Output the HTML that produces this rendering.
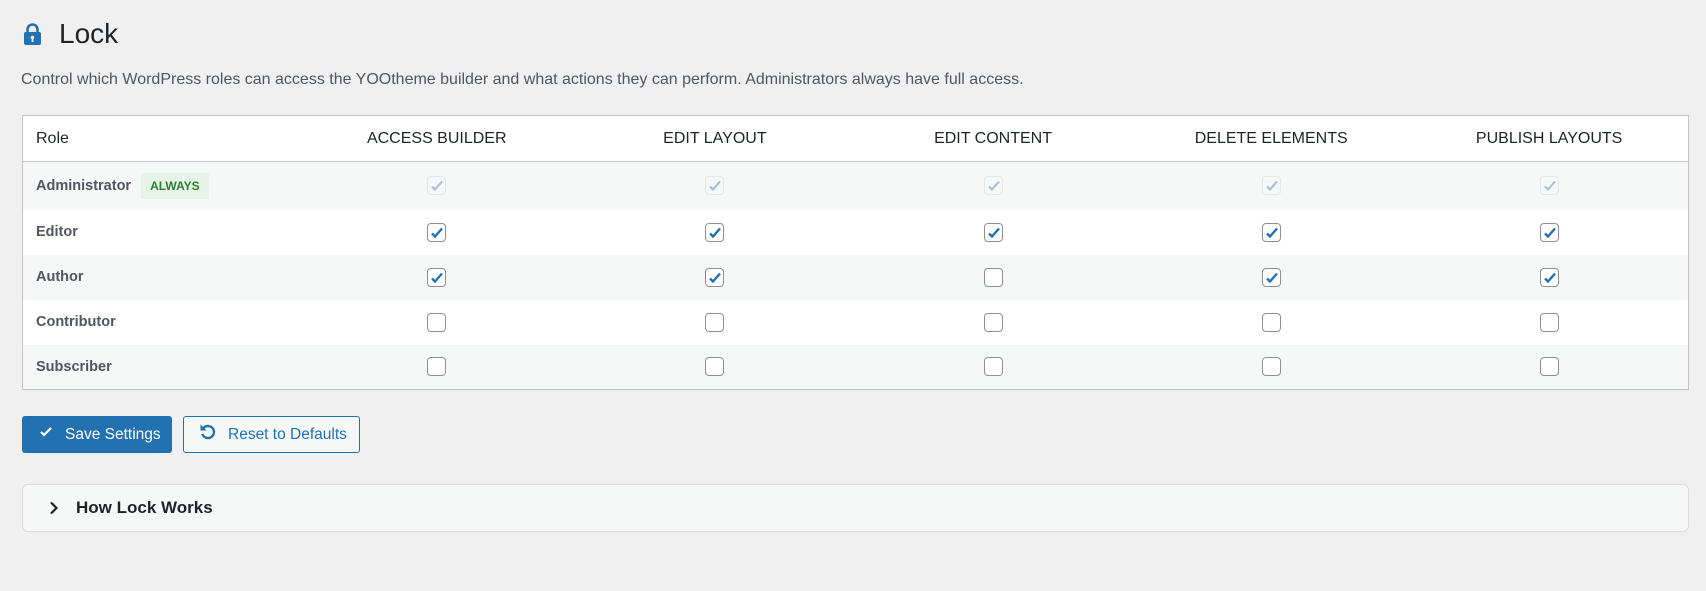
<!DOCTYPE html>
<html><head><meta charset="utf-8"><style>
*{box-sizing:border-box;margin:0;padding:0}
body{width:1706px;height:591px;background:#f0f0f1;font-family:"Liberation Sans",sans-serif;color:#1d2327;position:relative;overflow:hidden}
h1{position:absolute;left:59px;top:18px;font-size:28px;font-weight:500;color:#1d2327}
.lk{position:absolute;left:24px;top:23px}
.desc{position:absolute;left:21px;top:71px;font-size:16px;color:#50575e;white-space:nowrap}
table{position:absolute;left:22px;top:115px;width:1667px;border-collapse:collapse;border:1px solid #c3c4c7;background:#fff;table-layout:fixed}
th{height:46px;font-weight:normal;font-size:16px;color:#1d2327;border-bottom:1px solid #c3c4c7;text-align:center}
th:first-child{text-align:left;padding-left:13px}
td{height:45px;text-align:center}
td:first-child{text-align:left;padding-left:13px;font-size:14.5px;font-weight:bold;color:#50575e;white-space:nowrap}
tr.g td{background:#f6f7f7}
tr.a td{height:48px}
.cb{display:inline-block;width:19px;height:19px;border:1px solid #8c8f94;border-radius:4px;background:#fff;vertical-align:middle;position:relative}
.cb svg{position:absolute;left:1px;top:1px}
.cb.d{border-color:#e6e7e8;background:#f6f7f7}
.al{display:inline-block;margin-left:10px;background:#e8f3e8;color:#2e7d32;font-size:12px;font-weight:bold;padding:6px 9px;vertical-align:middle}
.btn{position:absolute;top:416px;height:37px;border-radius:3px;font-size:15.5px;display:flex;align-items:center;white-space:nowrap}
.save{left:22px;width:150px;background:#2271b1;color:#fff;padding-left:17px}
.reset{left:183px;width:177px;border:1px solid #2271b1;color:#2271b1;background:#f6f7f7;padding-left:15px}
.panel{position:absolute;left:22px;top:484px;width:1667px;height:48px;border:1px solid #dcdcde;border-radius:6px;background:#f6f7f7;font-size:17px;font-weight:bold;display:flex;align-items:center;padding-left:53px}
</style></head><body>
<svg class="lk" width="17" height="22" viewBox="0 0 17 22"><path d="M3.5 10V6.5a5 5 0 0 1 10 0V10" fill="none" stroke="#2271b1" stroke-width="2.6"/><rect x="0" y="9" width="17" height="13" rx="2" fill="#2271b1"/><circle cx="8.5" cy="14.5" r="1.8" fill="#f0f0f1"/><rect x="7.6" y="15" width="1.8" height="4" fill="#f0f0f1"/></svg>
<h1>Lock</h1>
<div class="desc">Control which WordPress roles can access the YOOtheme builder and what actions they can perform. Administrators always have full access.</div>
<table>
<colgroup><col style="width:275px"><col style="width:278px"><col style="width:278px"><col style="width:278px"><col style="width:278px"><col style="width:278px"></colgroup>
<tr><th>Role</th><th>ACCESS BUILDER</th><th>EDIT LAYOUT</th><th>EDIT CONTENT</th><th>DELETE ELEMENTS</th><th>PUBLISH LAYOUTS</th></tr>
<tr class="g a"><td>Administrator<span class="al">ALWAYS</span></td>
<td><span class="cb d"><svg width="16" height="16" viewBox="0 0 16 16"><path d="M3 8.5l3 3 7-8" fill="none" stroke="#a7bcd6" stroke-width="2"/></svg></span></td>
<td><span class="cb d"><svg width="16" height="16" viewBox="0 0 16 16"><path d="M3 8.5l3 3 7-8" fill="none" stroke="#a7bcd6" stroke-width="2"/></svg></span></td>
<td><span class="cb d"><svg width="16" height="16" viewBox="0 0 16 16"><path d="M3 8.5l3 3 7-8" fill="none" stroke="#a7bcd6" stroke-width="2"/></svg></span></td>
<td><span class="cb d"><svg width="16" height="16" viewBox="0 0 16 16"><path d="M3 8.5l3 3 7-8" fill="none" stroke="#a7bcd6" stroke-width="2"/></svg></span></td>
<td><span class="cb d"><svg width="16" height="16" viewBox="0 0 16 16"><path d="M3 8.5l3 3 7-8" fill="none" stroke="#a7bcd6" stroke-width="2"/></svg></span></td></tr>
<tr><td>Editor</td>
<td><span class="cb"><svg width="16" height="16" viewBox="0 0 16 16"><path d="M3 8.5l3 3 7-8" fill="none" stroke="#2271b1" stroke-width="2.4"/></svg></span></td>
<td><span class="cb"><svg width="16" height="16" viewBox="0 0 16 16"><path d="M3 8.5l3 3 7-8" fill="none" stroke="#2271b1" stroke-width="2.4"/></svg></span></td>
<td><span class="cb"><svg width="16" height="16" viewBox="0 0 16 16"><path d="M3 8.5l3 3 7-8" fill="none" stroke="#2271b1" stroke-width="2.4"/></svg></span></td>
<td><span class="cb"><svg width="16" height="16" viewBox="0 0 16 16"><path d="M3 8.5l3 3 7-8" fill="none" stroke="#2271b1" stroke-width="2.4"/></svg></span></td>
<td><span class="cb"><svg width="16" height="16" viewBox="0 0 16 16"><path d="M3 8.5l3 3 7-8" fill="none" stroke="#2271b1" stroke-width="2.4"/></svg></span></td></tr>
<tr class="g"><td>Author</td>
<td><span class="cb"><svg width="16" height="16" viewBox="0 0 16 16"><path d="M3 8.5l3 3 7-8" fill="none" stroke="#2271b1" stroke-width="2.4"/></svg></span></td>
<td><span class="cb"><svg width="16" height="16" viewBox="0 0 16 16"><path d="M3 8.5l3 3 7-8" fill="none" stroke="#2271b1" stroke-width="2.4"/></svg></span></td>
<td><span class="cb"></span></td>
<td><span class="cb"><svg width="16" height="16" viewBox="0 0 16 16"><path d="M3 8.5l3 3 7-8" fill="none" stroke="#2271b1" stroke-width="2.4"/></svg></span></td>
<td><span class="cb"><svg width="16" height="16" viewBox="0 0 16 16"><path d="M3 8.5l3 3 7-8" fill="none" stroke="#2271b1" stroke-width="2.4"/></svg></span></td></tr>
<tr><td>Contributor</td><td><span class="cb"></span></td><td><span class="cb"></span></td><td><span class="cb"></span></td><td><span class="cb"></span></td><td><span class="cb"></span></td></tr>
<tr class="g"><td>Subscriber</td><td><span class="cb"></span></td><td><span class="cb"></span></td><td><span class="cb"></span></td><td><span class="cb"></span></td><td><span class="cb"></span></td></tr>
</table>
<div class="btn save"><svg width="14" height="14" viewBox="0 0 14 14" style="margin-right:12px;margin-top:-6px;flex:none"><path d="M2 7l3 3 7-7" fill="none" stroke="#fff" stroke-width="2.2"/></svg>Save Settings</div>
<div class="btn reset"><svg width="18" height="18" viewBox="0 0 18 18" style="margin-right:11px;margin-top:-6px;flex:none"><path d="M4.5 5A6 6 0 1 1 3.3 11" fill="none" stroke="#2271b1" stroke-width="2.4"/><path d="M1.5 1.5v6h6z" fill="#2271b1"/></svg>Reset to Defaults</div>
<div class="panel"><svg width="10" height="14" viewBox="0 0 10 14" style="position:absolute;left:26px;top:16px"><path d="M2 1.5l5.5 5.5-5.5 5.5" fill="none" stroke="#1d2327" stroke-width="2.2"/></svg>How Lock Works</div>
</body></html>
